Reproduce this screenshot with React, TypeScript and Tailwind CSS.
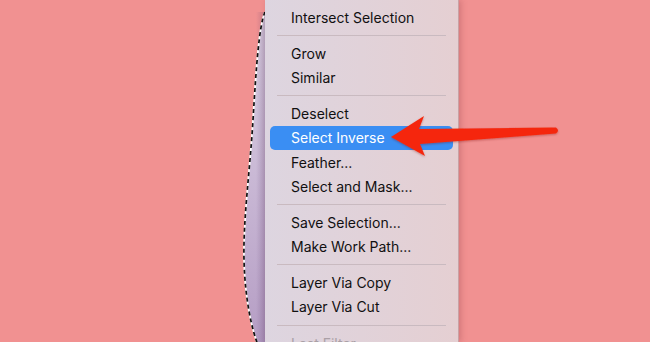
import React from "react";

type Entry = { label: string; sel?: boolean; dim?: boolean } | "sep";

const entries: Entry[] = [
  { label: "Intersect Selection" },
  "sep",
  { label: "Grow" },
  { label: "Similar" },
  "sep",
  { label: "Deselect" },
  { label: "Select Inverse", sel: true },
  { label: "Feather..." },
  { label: "Select and Mask..." },
  "sep",
  { label: "Save Selection..." },
  { label: "Make Work Path..." },
  "sep",
  { label: "Layer Via Copy" },
  { label: "Layer Via Cut" },
  "sep",
  { label: "Last Filter", dim: true },
];

export default function App() {
  return (
    <div
      className="relative flex w-[650px] h-[342px] overflow-hidden bg-[#f19191]"
      style={{ fontFamily: "Inter, 'Noto Sans', sans-serif" }}
    >
      {/* selection shape with marching ants */}
      <svg className="absolute left-0 top-0" width="650" height="342" viewBox="0 0 650 342">
        <defs>
          <linearGradient id="shape" x1="0" y1="0" x2="0" y2="1">
            <stop offset="0" stopColor="#dcd2e3" />
            <stop offset="0.5" stopColor="#c9b8d5" />
            <stop offset="1" stopColor="#b59dc4" />
          </linearGradient>
          <linearGradient id="edge" x1="0" y1="0" x2="1" y2="0">
            <stop offset="0" stopColor="#5a3b6a" stopOpacity="0" />
            <stop offset="1" stopColor="#5a3b6a" stopOpacity="0.3" />
          </linearGradient>
        </defs>
        <path
          d="M265,12 C259,25 256,70 253,120 C250,170 243,220 244,260 C245,300 252,330 258,345 L266,345 L266,12 Z"
          fill="url(#shape)"
        />
        <rect x="256" y="12" width="10" height="333" fill="url(#edge)" />
        <path
          d="M265,12 C259,25 256,70 253,120 C250,170 243,220 244,260 C245,300 252,330 258,345"
          fill="none"
          stroke="#ffffff"
          strokeWidth="1.7"
        />
        <path
          d="M265,12 C259,25 256,70 253,120 C250,170 243,220 244,260 C245,300 252,330 258,345"
          fill="none"
          stroke="#111111"
          strokeWidth="1.7"
          strokeDasharray="4 3"
        />
      </svg>

      <div className="w-[265px] shrink-0" />

      {/* menu */}
      <div className="relative z-10 w-[194px] h-full shrink-0 flex flex-col pt-[5px] bg-linear-to-r from-[#ddd5e0] to-[#e5cfd2] border-r border-[#c9a2a5] shadow-[2px_0_6px_rgba(120,40,50,0.25)]">
        {entries.map((e, i) =>
          e === "sep" ? (
            <div key={i} className="h-3 shrink-0 flex items-center px-[12px]">
              <div className="h-px w-full bg-[#c9bac0]" />
            </div>
          ) : (
            <div
              key={i}
              className={
                "h-[24.2px] shrink-0 flex items-center mx-[5px] pl-[21px] rounded-[5px] text-[14px] " +
                (e.sel ? "bg-[#3a8ef3] text-white" : e.dim ? "text-[#aaa0a6]" : "text-[#111011]")
              }
            >
              {e.label}
            </div>
          )
        )}
      </div>

      <div className="flex-1" />

      {/* arrow */}
      <svg className="absolute left-0 top-0 z-20" width="650" height="342" viewBox="0 0 650 342">
        <defs>
          <filter id="ds" x="-10%" y="-50%" width="120%" height="200%">
            <feDropShadow dx="0" dy="1" stdDeviation="1" floodColor="#7a1010" floodOpacity="0.35" />
          </filter>
        </defs>
        <path
          d="M391,137 L424,116 L419,129 L556,127.5 Q560,130.5 556,133.5 L420,144 L425,156 Z"
          fill="#f5280f"
          filter="url(#ds)"
        />
      </svg>
    </div>
  );
}
